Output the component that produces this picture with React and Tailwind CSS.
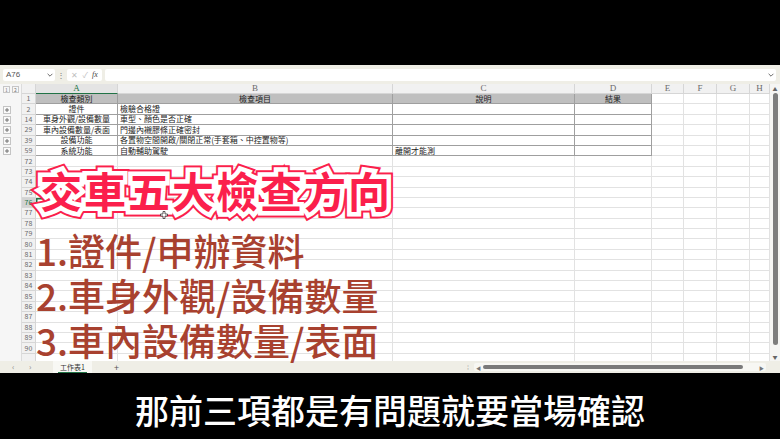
import React from "react";

const COLS = [
  { k: "A", w: "w-[82px]" },
  { k: "B", w: "w-[275px]" },
  { k: "C", w: "w-[182px]" },
  { k: "D", w: "w-[77px]" },
  { k: "E", w: "w-[32px]" },
  { k: "F", w: "w-[33px]" },
  { k: "G", w: "w-[33px]" },
  { k: "H", w: "w-[20px]" },
];

const TABLE = [
  { n: "1", header: true, cells: ["檢查類別", "檢查項目", "說明", "結果"] },
  { n: "2", plus: true, cells: ["證件", "檢驗合格證", "", ""] },
  { n: "14", plus: true, cells: ["車身外觀/設備數量", "車型、顏色是否正確", "", ""] },
  { n: "29", plus: true, cells: ["車內設備數量/表面", "門邊內襯膠條正確密封", "", ""] },
  { n: "39", plus: true, cells: ["設備功能", "各置物空間開啟/關閉正常(手套箱、中控置物等)", "", ""] },
  { n: "59", plus: true, cells: ["系統功能", "自動輔助駕駛", "離開才能測", ""] },
];

const EMPTY = [];
for (let i = 72; i <= 90; i++) EMPTY.push(String(i));
EMPTY.push("");

function Chevron({ className }) {
  return (
    <svg viewBox="0 0 10 10" className={className}>
      <path d="M2 3.5 L5 6.5 L8 3.5" fill="none" stroke="#666" strokeWidth="1.2" />
    </svg>
  );
}

function RowHead({ n, selected }) {
  return (
    <div
      className={
        "w-[14px] shrink-0 h-full flex items-center justify-center text-[7px] leading-none border-r border-b border-[#d6d6d6] " +
        (selected ? "bg-[#d3d3d3] text-[#217346]" : "bg-[#f1f1f1] text-[#6b6b6b]")
      }
    >
      {n}
    </div>
  );
}

function Outline({ plus }) {
  return (
    <div className="w-[22px] shrink-0 h-full bg-[#f6f6f6] border-r border-[#dcdcdc] flex items-center pl-[3px]">
      {plus && (
        <div className="w-[8px] h-[8px] border border-[#c4c4c4] bg-[#fafafa] flex items-center justify-center">
          <svg width="6" height="6" viewBox="0 0 6 6">
            <path d="M3 1v4M1 3h4" stroke="#666" strokeWidth="0.9" />
          </svg>
        </div>
      )}
    </div>
  );
}

function TableRow({ row }) {
  return (
    <div className="h-[10.4px] flex shrink-0">
      <Outline plus={row.plus} />
      <RowHead n={row.n} />
      {COLS.map((c, i) => {
        const inTable = i < 4;
        const txt = inTable ? row.cells[i] : "";
        const align = row.header || i === 0 ? "justify-center" : "justify-start pl-[2px]";
        return (
          <div
            key={c.k}
            className={
              c.w +
              " shrink-0 h-full flex items-center overflow-hidden whitespace-nowrap text-[8px] leading-none text-[#222] " +
              align +
              " " +
              (inTable
                ? "border-r border-b border-[#9f9f9f] " + (row.header ? "bg-[#bfbfbf]" : "bg-white")
                : "border-r border-b border-[#e2e2e2] bg-white")
            }
          >
            {txt}
          </div>
        );
      })}
    </div>
  );
}

function EmptyRow({ n }) {
  const sel = n === "76";
  return (
    <div className="h-[10.4px] flex shrink-0">
      <Outline />
      <RowHead n={n} selected={sel} />
      {COLS.map((c, i) => (
        <div
          key={c.k}
          className={
            c.w +
            " shrink-0 h-full border-r border-b border-[#e2e2e2] bg-white " +
            (sel && i === 0 ? "shadow-[inset_0_0_0_1.5px_#217346]" : "")
          }
        />
      ))}
    </div>
  );
}

function StrokeText({ text }) {
  return (
    <div className="grid font-bold text-[42px] leading-none tracking-[2px]">
      <span className="col-start-1 row-start-1 text-[#fb1f4c] [-webkit-text-stroke:13px_#fb1f4c]">{text}</span>
      <span className="col-start-1 row-start-1 text-white [-webkit-text-stroke:9px_#ffffff]">{text}</span>
      <span className="col-start-1 row-start-1 text-[#fb1f4c]">{text}</span>
    </div>
  );
}

export default function App() {
  return (
    <div className="relative w-[780px] h-[439px] bg-black overflow-hidden flex flex-col font-['Noto_Sans_CJK_TC','Noto_Sans_CJK_SC',sans-serif]">
      <div className="h-[65px] shrink-0 bg-black" />

      {/* Excel */}
      <div className="h-[308px] shrink-0 flex flex-col bg-[#efeee6]">
        {/* formula bar */}
        <div className="h-[19px] shrink-0 flex items-center pl-[3px] pr-[4px]">
          <div className="w-[52px] h-[12px] bg-white rounded-[2px] flex items-center justify-between pl-[3px] pr-[1px] text-[8px] leading-none text-[#555] font-['Liberation_Sans',sans-serif]">
            <span>A76</span>
            <Chevron className="w-[8px] h-[8px]" />
          </div>
          <div className="w-[12px] flex justify-center text-[8px] leading-none text-[#777]">⋮</div>
          <div className="w-[35px] h-[12px] bg-white rounded-[2px] flex items-center justify-around px-[2px] text-[8px] leading-none">
            <span className="text-[#c0c0c0]">✕</span>
            <span className="text-[#c0c0c0]">✓</span>
            <span className="text-[#444] italic font-['Liberation_Serif',serif]">fx</span>
          </div>
          <div className="ml-[3px] flex-1 h-[12px] bg-white rounded-[2px] flex items-center justify-end pr-[1px]">
            <Chevron className="w-[8px] h-[8px]" />
          </div>
        </div>

        {/* grid */}
        <div className="h-[277px] shrink-0 flex bg-white">
          <div className="w-[770px] shrink-0 flex flex-col overflow-hidden">
            {/* column header */}
            <div className="h-[10px] flex shrink-0">
              <div className="w-[22px] shrink-0 h-full bg-[#f6f6f6] border-r border-[#dcdcdc] flex items-center gap-[2px] pl-[3px]">
                <div className="w-[7px] h-[7px] border border-[#c6c6c6] text-[5px] leading-none flex items-center justify-center text-[#777]">1</div>
                <div className="w-[7px] h-[7px] border border-[#c6c6c6] text-[5px] leading-none flex items-center justify-center text-[#777]">2</div>
              </div>
              <div className="w-[14px] shrink-0 h-full bg-[#f1f1f1] border-r border-b border-[#d6d6d6]" />
              {COLS.map((c, i) => (
                <div
                  key={c.k}
                  className={
                    c.w +
                    " shrink-0 h-full flex items-center justify-center text-[9px] leading-none font-['Liberation_Serif',serif] border-r border-[#d6d6d6] " +
                    (i === 0
                      ? "bg-[#e4e4e4] text-[#217346] border-b-[1.5px] border-b-[#217346]"
                      : "bg-[#f1f1f1] text-[#6b6b6b] border-b border-b-[#d6d6d6]")
                  }
                >
                  {c.k}
                </div>
              ))}
            </div>
            {TABLE.map((r) => (
              <TableRow key={r.n} row={r} />
            ))}
            {EMPTY.map((n, i) => (
              <EmptyRow key={i} n={n} />
            ))}
          </div>
          {/* vertical scrollbar */}
          <div className="w-[10px] shrink-0 bg-[#f5f5f3] flex flex-col items-center">
            <div className="h-[9px] flex items-center justify-center text-[5px] leading-none text-[#666]">▲</div>
            <div className="w-[5px] h-[252px] rounded-[3px] bg-[#7d7d7d]" />
            <div className="flex-1 flex items-end pb-[2px] text-[5px] leading-none text-[#666]">▼</div>
          </div>
        </div>

        {/* sheet tabs */}
        <div className="h-[12px] shrink-0 flex items-center text-[#888]">
          <span className="ml-[12px] w-[6px] text-[8px] leading-none">‹</span>
          <span className="ml-[11px] w-[6px] text-[8px] leading-none">›</span>
          <div className="ml-[18px] w-[39px] h-full bg-[#f8f8f4] flex flex-col items-center justify-center relative">
            <span className="text-[7px] leading-none text-[#333]">工作表1</span>
            <div className="absolute bottom-0 left-[5px] right-[5px] h-[1.5px] bg-[#217346]" />
          </div>
          <span className="ml-[22px] text-[9px] leading-none text-[#555]">+</span>
          <span className="ml-[348px] text-[7px] leading-none text-[#aaa]">⁞</span>
          <div className="ml-[5px] w-[292px] h-[8px] flex items-center bg-[#f7f7f3] rounded-[2px]">
            <span className="ml-[2px] text-[5px] leading-none text-[#777]">◀</span>
            <div className="ml-[2px] w-[260px] h-[4px] rounded-[2px] bg-[#7a7a7a]" />
            <span className="ml-auto mr-[2px] text-[5px] leading-none text-[#777]">▶</span>
          </div>
        </div>
      </div>

      {/* subtitle */}
      <div className="flex-1 flex justify-center pt-[20px]">
        <span className="text-white text-[34px] leading-none font-medium">那前三項都是有問題就要當場確認</span>
      </div>

      {/* overlay text */}
      <div className="absolute left-[40px] top-[169px]">
        <StrokeText text="交車五大檢查方向" />
      </div>
      <div className="absolute left-[36px] top-[228px] flex flex-col text-[37px] leading-[45px] font-medium text-[#a8412f]">
        <span>1.證件/申辦資料</span>
        <span>2.車身外觀/設備數量</span>
        <span>3.車內設備數量/表面</span>
      </div>

      {/* cursor */}
      <svg className="absolute left-[160px] top-[211px]" width="8" height="8" viewBox="0 0 8 8">
        <path d="M3 0.5h2v2.5h2.5v2h-2.5v2.5h-2v-2.5h-2.5v-2h2.5z" fill="#fff" stroke="#333" strokeWidth="0.8" />
      </svg>
    </div>
  );
}
